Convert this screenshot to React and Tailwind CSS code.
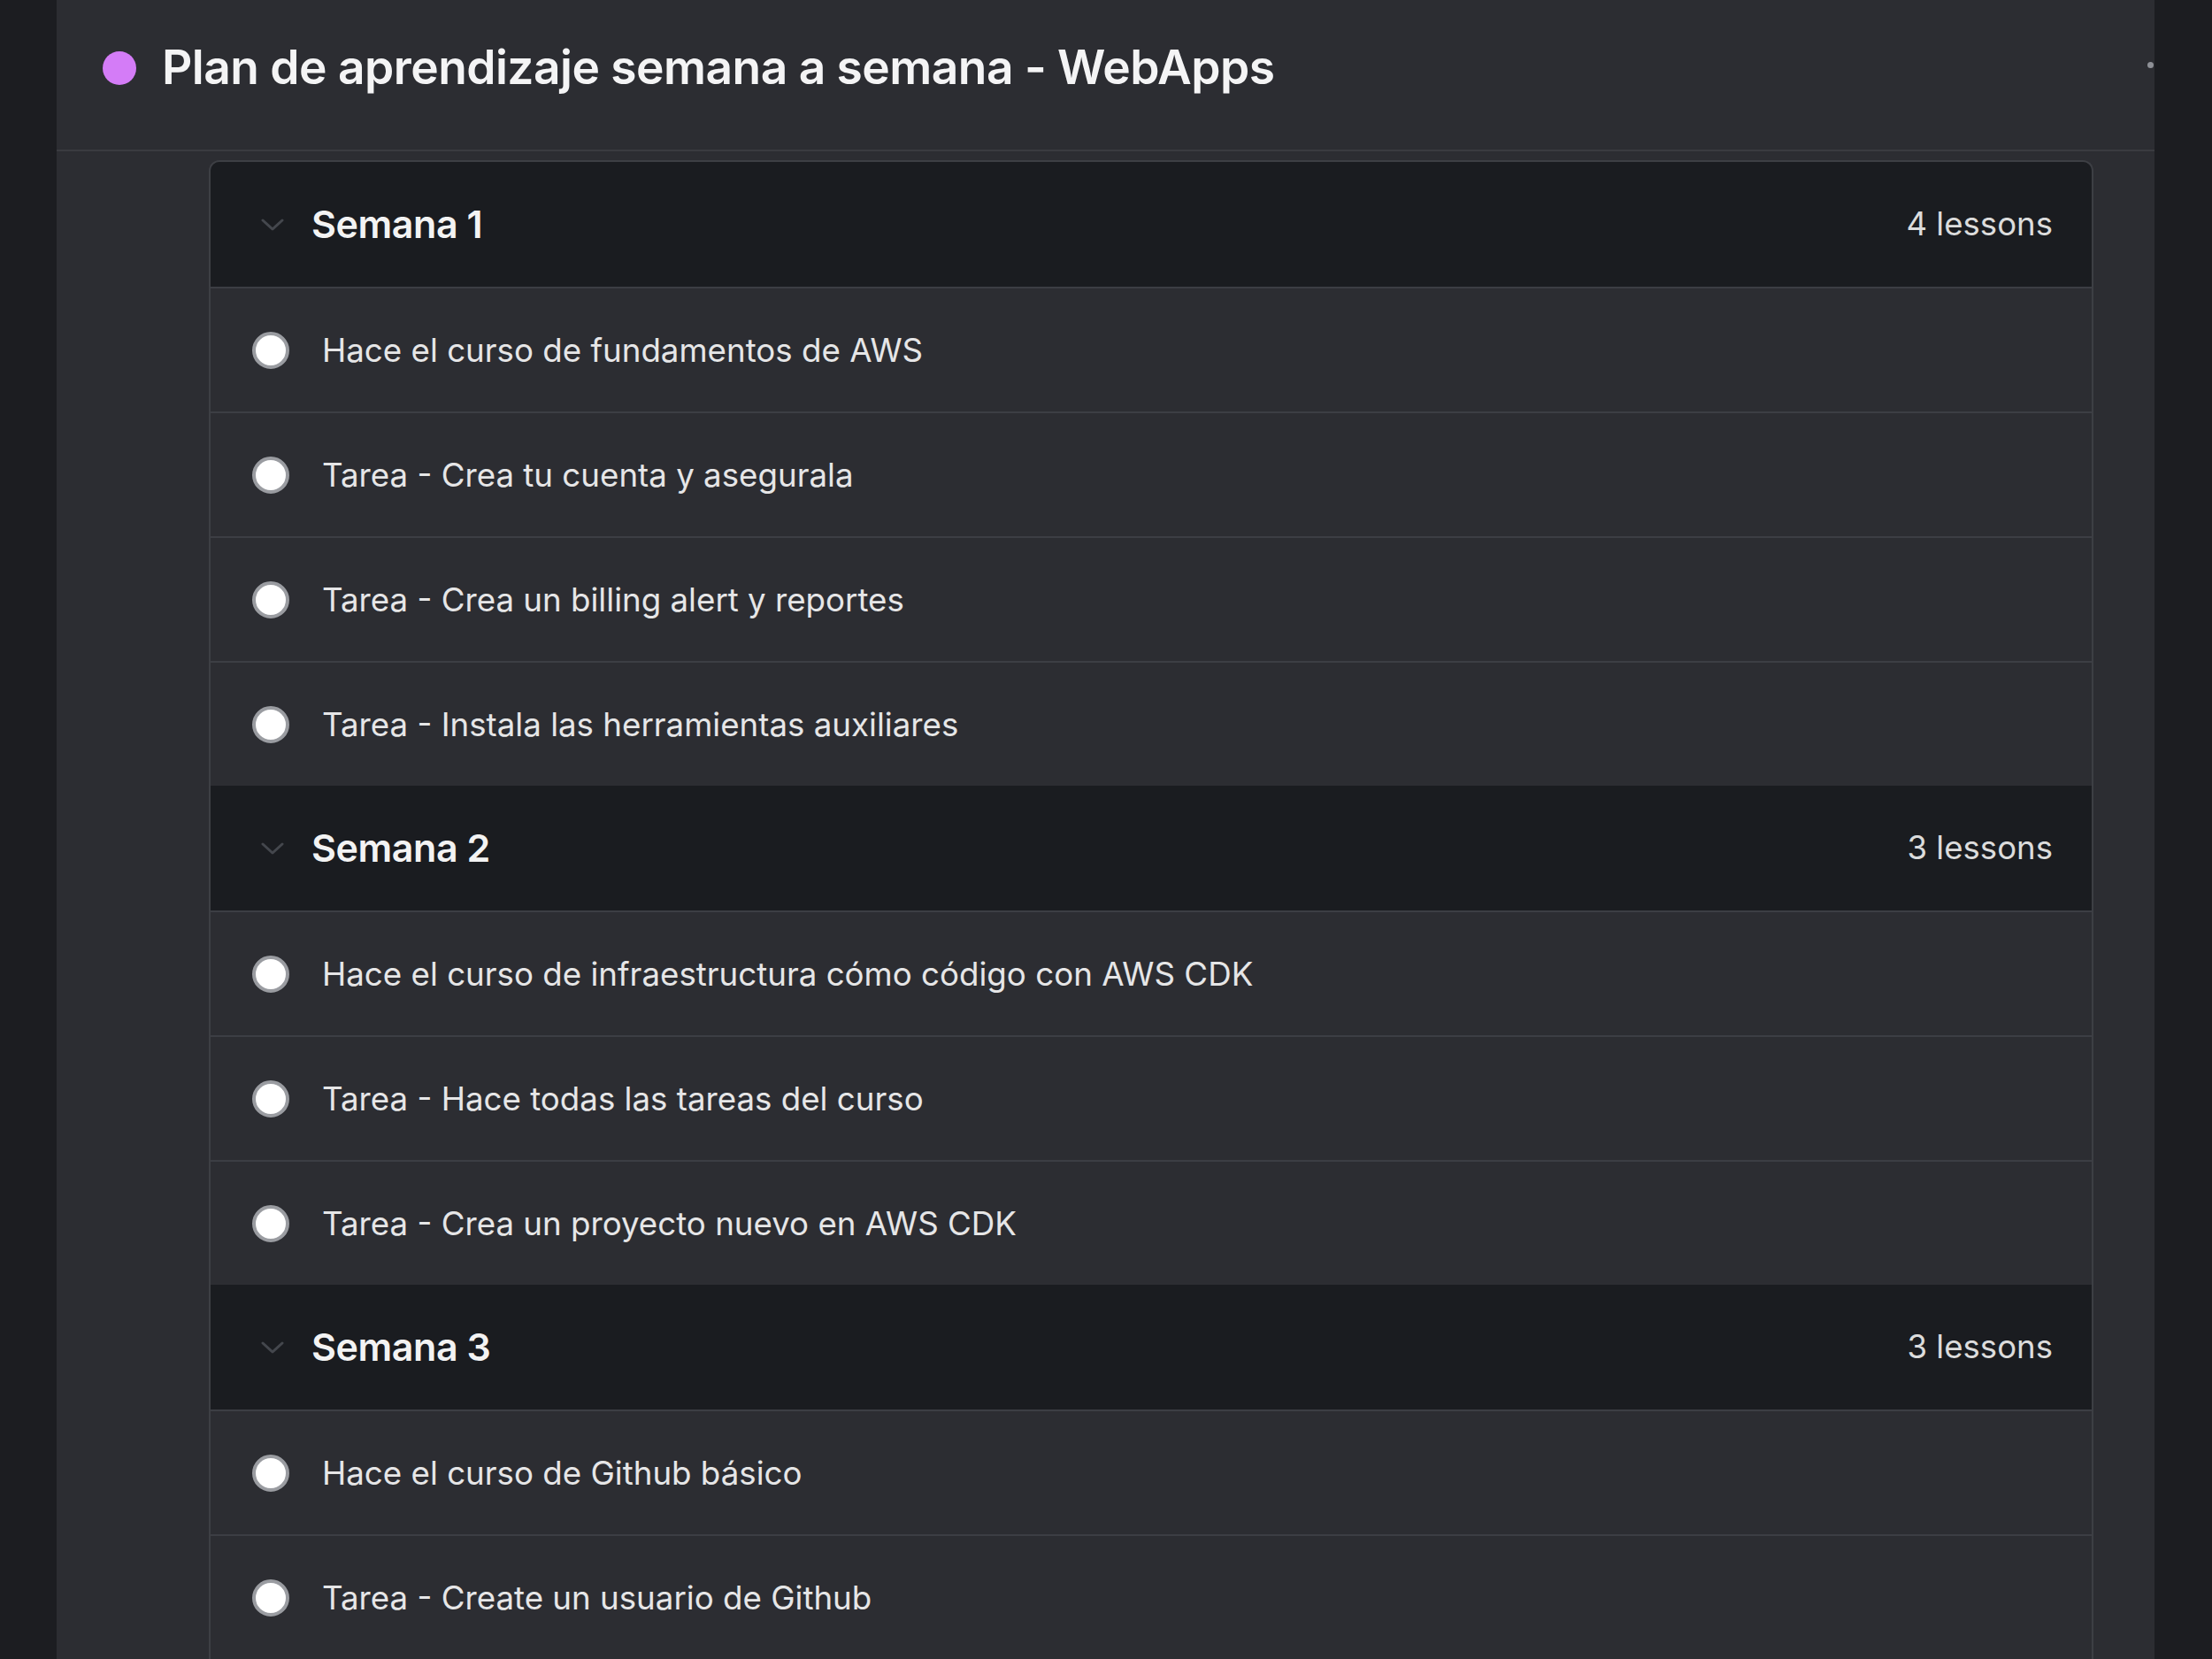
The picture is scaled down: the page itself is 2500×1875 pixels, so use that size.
import React from 'react'

const weeks = [
  {
    title: 'Semana 1',
    count: 4,
    lessons: [
      'Hace el curso de fundamentos de AWS',
      'Tarea - Crea tu cuenta y asegurala',
      'Tarea - Crea un billing alert y reportes',
      'Tarea - Instala las herramientas auxiliares',
    ],
  },
  {
    title: 'Semana 2',
    count: 3,
    lessons: [
      'Hace el curso de infraestructura cómo código con AWS CDK',
      'Tarea - Hace todas las tareas del curso',
      'Tarea - Crea un proyecto nuevo en AWS CDK',
    ],
  },
  {
    title: 'Semana 3',
    count: 3,
    lessons: [
      'Hace el curso de Github básico',
      'Tarea - Create un usuario de Github',
    ],
  },
]

function Chevron() {
  return (
    <svg width="26" height="16" viewBox="0 0 26 16" fill="none" className="shrink-0">
      <path d="M2 3 L13 13 L24 3" stroke="#44474d" strokeWidth="3" strokeLinecap="round" strokeLinejoin="round" />
    </svg>
  )
}

function WeekHeader({ title, count }) {
  return (
    <div className="h-[141px] shrink-0 bg-[#1a1c20] flex items-center pl-[57px] pr-[44px]">
      <Chevron />
      <span className="ml-[31px] text-[43px] font-semibold text-[#f3f3f3] tracking-[-0.01em]">{title}</span>
      <span className="ml-auto text-[36.6px] text-[#dcdcdc]">{count} lessons</span>
    </div>
  )
}

function Lesson({ text }) {
  return (
    <div className="h-[141px] shrink-0 border-t-2 border-[#3c3e44] flex items-center pl-[47px]">
      <span className="w-[42px] h-[42px] rounded-full bg-white border-[4px] border-[#9a9ca1] shrink-0" />
      <span className="ml-[37px] text-[36.7px] text-[#e6e6e7]">{text}</span>
    </div>
  )
}

export default function App() {
  return (
    <div
      className="w-[2500px] h-[1875px] bg-[#1c1d21] flex overflow-hidden"
      style={{ fontFamily: 'Inter, "Noto Sans", sans-serif' }}
    >
      <div className="ml-[64px] w-[2371px] h-full bg-[#2c2d32] flex flex-col relative">
        {/* header */}
        <div className="h-[171px] shrink-0 border-b-2 border-[#3a3b40] flex items-start pt-[43px] pl-[52px]">
          <span className="w-[38px] h-[38px] rounded-full bg-[#d47cf7] mt-[15px] shrink-0" />
          <h1 className="ml-[29px] text-[53.3px] leading-[66px] font-semibold text-[#f4f4f5] tracking-[-0.01em]">
            Plan de aprendizaje semana a semana - WebApps
          </h1>
        </div>
        <span className="absolute left-[2363px] top-[70px] w-[7px] h-[7px] rounded-full bg-[#8e9096]" />

        {/* lessons card */}
        <div className="mt-[10px] ml-[172px] w-[2130px] border-2 border-b-0 border-[#3d3f44] rounded-t-[12px] overflow-hidden flex flex-col">
          {weeks.map((w) => (
            <React.Fragment key={w.title}>
              <WeekHeader title={w.title} count={w.count} />
              {w.lessons.map((l) => (
                <Lesson key={l} text={l} />
              ))}
            </React.Fragment>
          ))}
        </div>
      </div>
    </div>
  )
}
